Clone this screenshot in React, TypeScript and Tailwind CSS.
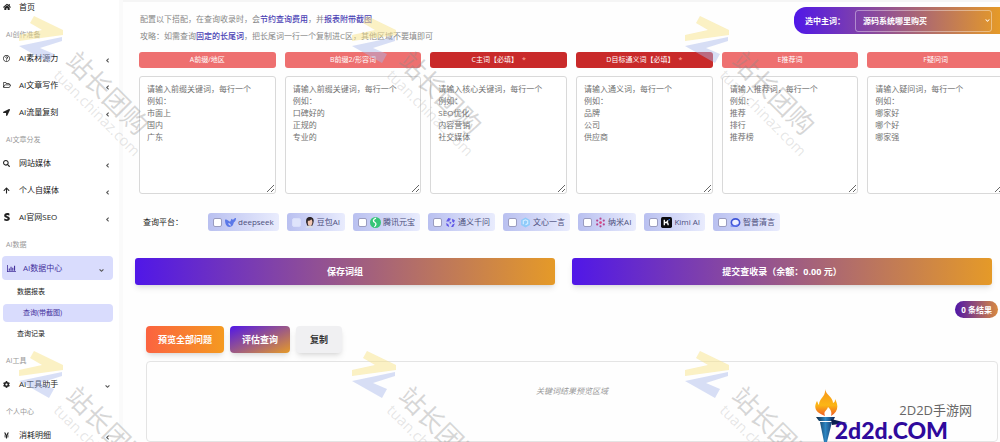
import clsx from 'clsx';
import type { ReactNode } from 'react';
import {
  FaAngleDown,
  FaAngleLeft,
  FaArrowUp,
  FaChevronDown,
  FaCog,
  FaHome,
  FaLocationArrow,
  FaRegFolderOpen,
  FaRegQuestionCircle,
  FaSearch,
  FaStripeS,
  FaYenSign
} from 'react-icons/fa';

type NavItemProps = {
  icon: ReactNode;
  label: string;
  arrow?: 'left' | 'down';
  active?: boolean;
};
function NavItem({ icon, label, arrow = 'left', active }: NavItemProps) {
  return (
    <a
      href="#"
      className={clsx(
        'flex h-6 shrink-0 items-center rounded text-[8px]',
        active
          ? 'mr-1.5 ml-0.5 bg-[#d9dcfd] pr-2 pl-[5px] text-[#43309c]'
          : 'pr-2 pl-[3px] text-[#222]'
      )}
    >
      <span className="w-4 shrink-0">{icon}</span>
      <span className="grow whitespace-nowrap">{label}</span>
      {arrow === 'left' ? (
        <FaAngleLeft size={7} className="mt-1 text-[#555]" />
      ) : (
        <FaAngleDown size={7} className="mt-1 text-[#555]" />
      )}
    </a>
  );
}

function NavLabel({ children }: { children: ReactNode }) {
  return <div className="h-[21px] shrink-0 pt-1.5 pl-1.5 text-[7px] leading-[14px] text-[#999]">{children}</div>;
}

function SubItem({ label, active }: { label: string; active?: boolean }) {
  return (
    <a
      href="#"
      className={clsx(
        'flex h-[18px] shrink-0 items-center rounded text-[7px]',
        active ? 'mr-1.5 ml-[3px] bg-[#d9dcfd] pl-5 text-[#43309c]' : 'pl-[17px] text-[#222]'
      )}
    >
      {label}
    </a>
  );
}

function Sidebar() {
  return (
    <nav className="flex w-[123px] shrink-0 flex-col gap-[3px] overflow-hidden border-r-4 border-[#fafafa]">
      <a href="#" className="mb-[5px] flex h-3.5 shrink-0 items-center pl-[3px] text-[8px] text-[#222]">
        <FaHome size={8} className="mr-2" />
        首页
      </a>
      <NavLabel>AI创作准备</NavLabel>
      <NavItem icon={<FaRegQuestionCircle size={7} />} label="AI素材源力" />
      <NavItem icon={<FaRegFolderOpen size={8} />} label="AI文章写作" />
      <NavItem icon={<FaLocationArrow size={7} />} label="AI流量复刻" />
      <NavLabel>AI文章分发</NavLabel>
      <NavItem icon={<FaSearch size={7} />} label="网站媒体" />
      <NavItem icon={<FaArrowUp size={7} />} label="个人自媒体" />
      <NavItem icon={<FaStripeS size={8} />} label="AI官网SEO" />
      <NavLabel>AI数据</NavLabel>
      <NavItem icon={<BarChartIcon />} label="AI数据中心" arrow="down" active />
      <div className="flex flex-col gap-[3px] pb-0.5">
        <SubItem label="数据报表" />
        <SubItem label="查询(带截图)" active />
        <SubItem label="查询记录" />
      </div>
      <NavLabel>AI工具</NavLabel>
      <NavItem icon={<FaCog size={7} />} label="AI工具助手" arrow="down" />
      <NavLabel>个人中心</NavLabel>
      <NavItem icon={<FaYenSign size={7} />} label="消耗明细" />
    </nav>
  );
}

function BarChartIcon() {
  return (
    <svg width="9" height="7" viewBox="0 0 18 14" fill="currentColor">
      <path d="M0 0h1.6v12.4H18V14H0zM3.5 7h2.2v4.5H3.5zM7 3.5h2.2v8H7zM10.5 5.5h2.2v6h-2.2zM14 1.5h2.2v10H14z" />
    </svg>
  );
}

const columns = [
  { title: 'A前缀/地区', hint: '前缀关键词', samples: ['市面上', '国内', '广东'] },
  { title: 'B前缀2/形容词', hint: '前缀关键词', samples: ['口碑好的', '正规的', '专业的'] },
  { title: 'C主词【必填】', hint: '核心关键词', samples: ['SEO优化', '内容营销', '社交媒体'], required: true },
  { title: 'D目标通义词【必填】', hint: '通义词', samples: ['品牌', '公司', '供应商'], required: true },
  { title: 'E推荐词', hint: '推荐词', samples: ['推荐', '排行', '推荐榜'] },
  { title: 'F疑问词', hint: '疑问词', samples: ['哪家好', '哪个好', '哪家强'] }
];

function WordColumn({ title, hint, samples, required }: (typeof columns)[number]) {
  return (
    <label className="flex min-w-0 flex-col gap-2">
      <span
        className={clsx(
          'flex h-4 items-center justify-center gap-1 rounded-[3px] text-[7px] text-white',
          required ? 'bg-[#c92a2a]' : 'bg-[#ee7070]'
        )}
      >
        {title}
        {required && <span className="text-[#ffb3a0]">*</span>}
      </span>
      <textarea
        className="h-[118px] w-full rounded-[3px] border border-[#d9d9d9] bg-white px-[7px] py-1.5 text-[8px] leading-[12px] placeholder:text-[#707070]"
        placeholder={[`请输入${hint}，每行一个`, '例如：', ...samples].join('\n')}
      />
    </label>
  );
}

const platforms = [
  {
    name: 'deepseek',
    icon: (
      <path
        d="M0 5c3-2 5 1 8 3 2 0 3-1 3-5 2 2 4 2 5 1 1-1 2-2 4-2 0 5-2 7-4 8-1 5-3 8-8 8-5 0-8-5-8-13zm6 6c0 3 2 5 5 5-1-3-2-5-5-5z"
        fill="#5b78e8"
      />
    )
  },
  {
    name: '豆包AI',
    disabled: true,
    icon: (
      <>
        <path d="M4 10C3 3 6 0 11 0s8 4 6 11l-2 5H6z" fill="#2b2326" />
        <path d="M3 20c1-4 4-4 8-4s6 1 7 4z" fill="#d7dbe6" />
        <path d="M7 7c3 0 5-1 6-3 2 2 3 4 2 8-1 3-3 5-5 4-2 0-4-3-3-9z" fill="#f1c6b2" />
      </>
    )
  },
  {
    name: '腾讯元宝',
    icon: (
      <>
        <circle cx="10" cy="10" r="10" fill="#35c577" />
        <path d="M11 2c-6 2-6 6-2 8 3 2 2 5-1 8" fill="none" stroke="#fff" strokeWidth="2.4" />
      </>
    )
  },
  {
    name: '通义千问',
    icon: (
      <path
        d="M6 2l5 1-4 5H2zM13 3l5 3-2 5-3-3zM18 12l-3 6h-4l3-5zM8 18l-5-2-1-5 4 2zM8 8l4 2-3 3z"
        fill="#6158e8"
      />
    )
  },
  {
    name: '文心一言',
    icon: (
      <>
        <path d="M10 1l8 4.5v9L10 19l-8-4.5v-9z" fill="#8fcbfa" />
        <path d="M6 13V7l4-2 4 2v5l-4 2" fill="none" stroke="#d7eeff" strokeWidth="2" />
      </>
    )
  },
  {
    name: '纳米AI',
    icon: (
      <g fill="#b8448f">
        <circle cx="10" cy="3" r="2" />
        <circle cx="4" cy="6.5" r="2" />
        <circle cx="16" cy="6.5" r="2" />
        <circle cx="10" cy="10" r="2.5" fill="#e0447a" />
        <circle cx="4" cy="13.5" r="2" />
        <circle cx="16" cy="13.5" r="2" />
        <circle cx="10" cy="17" r="2" />
      </g>
    )
  },
  {
    name: 'Kimi AI',
    icon: (
      <>
        <rect width="20" height="20" rx="3" fill="#0b0b10" />
        <path d="M6 5v10M6 10h4l3-4M10 10c3 0 3 2 3 5" fill="none" stroke="#fff" strokeWidth="2.4" />
        <circle cx="15" cy="5" r="1.4" fill="#2f7dff" />
      </>
    )
  },
  {
    name: '智普清言',
    icon: (
      <>
        <ellipse cx="10" cy="10" rx="7.5" ry="6.5" fill="#eef1ff" stroke="#3f55d8" strokeWidth="3" />
        <path d="M1 16C6 18 11 16 14 14" fill="none" stroke="#6d82f0" strokeWidth="2" />
      </>
    )
  }
];

function PlatformPicker() {
  return (
    <fieldset className="mt-[19px] flex h-[18px] items-center pl-5">
      <span className="w-[65px] shrink-0 text-[8px] text-[#222]">查询平台：</span>
      <div className="flex gap-2">
        {platforms.map(({ name, icon, disabled }) => (
          <label
            key={name}
            className="flex h-[18px] items-center rounded-[3px] bg-linear-to-r/srgb from-[#b9c0f0] to-[#e9ecfd] px-[5px] text-[8px] whitespace-nowrap text-[#4d4f7c]"
          >
            <input
              type="checkbox"
              disabled={disabled}
              className="mr-[3px] size-[9px] appearance-none rounded-[2px] border border-[#9a9cc0] bg-white checked:bg-[#5017e8] disabled:border-[#d9defa] disabled:bg-[#dfe4fb]"
            />
            <svg width="11" height="11" viewBox="0 0 20 20" className="mr-0.5">
              {icon}
            </svg>
            {name}
          </label>
        ))}
      </div>
    </fieldset>
  );
}

function WatermarkTile() {
  return (
    <svg viewBox="0 0 150 160" className="h-40 w-[150px] shrink-0 overflow-visible">
      <path d="M15 0l29 14v5L0 25v-6l23-5-12-7z" fill="#f8e48a" opacity="0.5" />
      <path d="M43 21v4l-22 7 14 6-5 9L0 30z" fill="#a9b8ea" opacity="0.45" />
      <g transform="translate(52 40) rotate(45)" fill="#8a8a8a" fillOpacity="0.34">
        <text className="text-[26px]" dominantBaseline="central">
          站长团购
        </text>
      </g>
      <g transform="translate(38 56) rotate(45)" fill="#999" fillOpacity="0.24">
        <text className="text-[15px]" dominantBaseline="central">
          tuan.chinaz.com
        </text>
      </g>
    </svg>
  );
}

function Watermark() {
  return (
    <div className="pointer-events-none absolute inset-0 flex flex-col gap-[175px] overflow-hidden pt-4 pl-[19px]">
      {[0, 1].map((row) => (
        <div key={row} className="flex gap-[183px]">
          <WatermarkTile />
          <WatermarkTile />
          <WatermarkTile />
        </div>
      ))}
    </div>
  );
}

function SiteBadge() {
  return (
    <div className="pointer-events-none absolute right-7 bottom-0 flex items-end">
      <svg width="32" height="53" viewBox="0 0 32 53" className="-mr-3">
        <defs>
          <linearGradient id="flame" x1="0" y1="0" x2="0" y2="1">
            <stop offset="0" stopColor="#f7941c" />
            <stop offset="0.6" stopColor="#fbb615" />
            <stop offset="1" stopColor="#ee5a24" />
          </linearGradient>
          <linearGradient id="torch">
            <stop offset="0" stopColor="#0b2440" />
            <stop offset="0.5" stopColor="#2e86c1" />
            <stop offset="1" stopColor="#0b2050" />
          </linearGradient>
        </defs>
        <path
          d="M10 0c1 6 8 8 8 14 2-1 2-2 2-4 4 7 3 13-4 17 1-4 0-6-3-9-1 4-5 4-3 9C1 24-2 19 2 12c1 2 1 3 2 4C4 9 11 8 10 0z"
          fill="url(#flame)"
        />
        <path d="M1 28h19l-2 4H4zM5 33h12l-5 20H9z" fill="url(#torch)" />
        <path d="M16 30l16 4-15 2z" fill="#0b2050" />
      </svg>
      <div className="flex flex-col">
        <span className="self-end text-[13px] leading-4 text-[#666]">2D2D手游网</span>
        <span className="pr-6 font-['Lato'] text-[23px] leading-6 font-black text-[#2f0a9c]">2d2d.COM</span>
      </div>
    </div>
  );
}

export default function App() {
  return (
    <div className="relative flex h-screen overflow-hidden bg-white font-['Open_Sans','Noto_Sans_CJK_SC',sans-serif]">
      <Sidebar />
      <main className="flex min-w-0 grow flex-col overflow-hidden border-t-2 border-[#f5f5f5] bg-[#fefefe]">
        <header className="flex h-[50px] shrink-0 justify-between pl-[17px]">
          <div className="pt-2 text-[8px] leading-[17px] text-[#888]">
            <p>
              配置以下搭配，在查询收录时，会<b className="font-medium text-[#4a40b4]">节约查询费用</b>，并
              <b className="font-medium text-[#4a40b4]">报表附带截图</b>
            </p>
            <p>
              攻略：如需查询<b className="font-medium text-[#4a40b4]">固定的长尾词</b>
              ，把长尾词一行一个复制进C区，其他区域不要填即可
            </p>
          </div>
          <div className="mt-[5px] flex h-[27px] w-[206px] items-center rounded-l-xl bg-linear-to-r/srgb from-[#5017e8] to-[#e59a28] pr-2 pl-[11px] text-[8px] font-bold text-white">
            <label htmlFor="main-word" className="w-[50px] shrink-0">
              选中主词：
            </label>
            <div className="relative grow">
              <select
                id="main-word"
                className="h-[22px] w-full appearance-none rounded-[3px] border border-white/40 bg-transparent pl-[7px]"
              >
                <option>源码系统哪里购买</option>
              </select>
              <FaChevronDown size={5} className="pointer-events-none absolute top-2 right-0.5" />
            </div>
          </div>
        </header>

        <section className="-mr-1 grid shrink-0 grid-cols-6 gap-[9px] pl-4">
          {columns.map((column) => (
            <WordColumn key={column.title} {...column} />
          ))}
        </section>

        <PlatformPicker />

        <div className="mt-[27px] grid shrink-0 grid-cols-2 gap-[17px] pr-2 pl-3">
          <button className="h-[27px] rounded-[3px] bg-linear-to-r/srgb from-[#5017e8] to-[#e59a28] text-[9px] font-bold text-white shadow-md">
            保存词组
          </button>
          <button className="h-[27px] rounded-[3px] bg-linear-to-r/srgb from-[#5017e8] to-[#e59a28] text-[9px] font-bold text-white shadow-md">
            提交查收录（余额：0.00 元）
          </button>
        </div>

        <div className="mt-4 mr-0.5 flex h-[17px] shrink-0 items-center self-end rounded-full bg-linear-to-r/srgb from-[#5017a8] to-[#d98a40] px-1.5 text-[8px] font-bold text-white">
          0 条结果
        </div>

        <div className="mt-2 flex h-[27px] shrink-0 gap-1.5 pl-[23px] text-[9px] font-bold">
          <button className="rounded bg-linear-to-r/srgb from-[#fb6340] to-[#f59a20] px-3 text-white shadow-md">
            预览全部问题
          </button>
          <button className="rounded bg-linear-to-br/srgb from-[#5017e8] to-[#e59a28] px-3 text-white shadow-md">
            评估查询
          </button>
          <button className="rounded bg-[#f0f0f2] px-3.5 text-[#333] shadow-md">复制</button>
        </div>

        <section className="mt-2 mr-0.5 ml-[23px] grow rounded border border-[#e4e4e4] pt-[23px] text-center text-[8px] leading-[12px] text-[#999] italic">
          关键词结果预览区域
        </section>
      </main>

      <Watermark />
      <SiteBadge />
    </div>
  );
}
